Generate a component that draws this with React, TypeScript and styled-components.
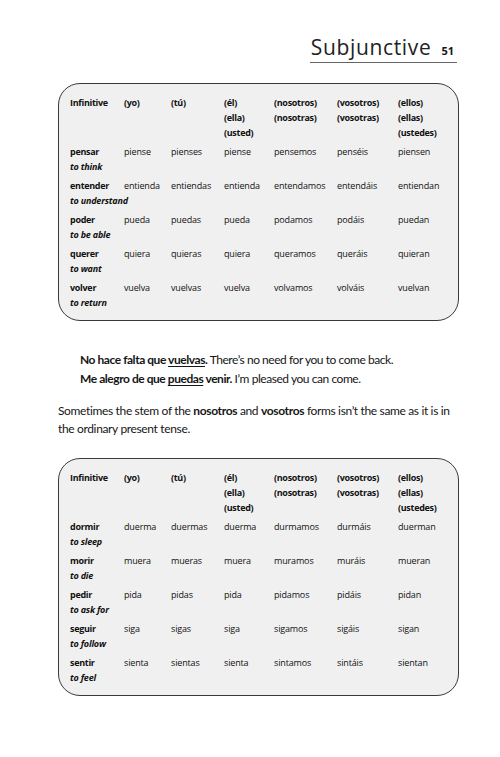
import React from 'react';
import styled, { createGlobalStyle } from 'styled-components';

type Verb = { inf: string; en: string; forms: string[] };

const headers: string[][] = [
  ['Infinitive'],
  ['(yo)'],
  ['(tú)'],
  ['(él)', '(ella)', '(usted)'],
  ['(nosotros)', '(nosotras)'],
  ['(vosotros)', '(vosotras)'],
  ['(ellos)', '(ellas)', '(ustedes)'],
];

const regularVerbs: Verb[] = [
  { inf: 'pensar', en: 'to think', forms: ['piense', 'pienses', 'piense', 'pensemos', 'penséis', 'piensen'] },
  { inf: 'entender', en: 'to understand', forms: ['entienda', 'entiendas', 'entienda', 'entendamos', 'entendáis', 'entiendan'] },
  { inf: 'poder', en: 'to be able', forms: ['pueda', 'puedas', 'pueda', 'podamos', 'podáis', 'puedan'] },
  { inf: 'querer', en: 'to want', forms: ['quiera', 'quieras', 'quiera', 'queramos', 'queráis', 'quieran'] },
  { inf: 'volver', en: 'to return', forms: ['vuelva', 'vuelvas', 'vuelva', 'volvamos', 'volváis', 'vuelvan'] },
];

const stemVerbs: Verb[] = [
  { inf: 'dormir', en: 'to sleep', forms: ['duerma', 'duermas', 'duerma', 'durmamos', 'durmáis', 'duerman'] },
  { inf: 'morir', en: 'to die', forms: ['muera', 'mueras', 'muera', 'muramos', 'muráis', 'mueran'] },
  { inf: 'pedir', en: 'to ask for', forms: ['pida', 'pidas', 'pida', 'pidamos', 'pidáis', 'pidan'] },
  { inf: 'seguir', en: 'to follow', forms: ['siga', 'sigas', 'siga', 'sigamos', 'sigáis', 'sigan'] },
  { inf: 'sentir', en: 'to feel', forms: ['sienta', 'sientas', 'sienta', 'sintamos', 'sintáis', 'sientan'] },
];

const ConjugationTable: React.FC<{ verbs: Verb[] }> = ({ verbs }) => (
  <Box>
    {headers.map((lines, i) => (
      <div key={i}>
        {lines.map((l) => (
          <Line key={l} $weight={700}>
            {l}
          </Line>
        ))}
      </div>
    ))}
    {verbs.map((v) => (
      <React.Fragment key={v.inf}>
        <div>
          <Line $weight={700}>{v.inf}</Line>
          <Gloss>{v.en}</Gloss>
        </div>
        {v.forms.map((f, i) => (
          <div key={i}>
            <Line $weight={500}>{f}</Line>
          </div>
        ))}
      </React.Fragment>
    ))}
  </Box>
);

export default function App() {
  return (
    <Page>
      <GlobalStyle />
      <Header>
        <TitleBar>
          <Title>Subjunctive</Title>
          <PageNo>51</PageNo>
        </TitleBar>
      </Header>

      <ConjugationTable verbs={regularVerbs} />

      <Examples>
        <Example>
          <b>
            No hace falta que <u>vuelvas</u>.
          </b>{' '}
          There’s no need for you to come back.
        </Example>
        <Example>
          <b>
            Me alegro de que <u>puedas</u> venir.
          </b>{' '}
          I’m pleased you can come.
        </Example>
      </Examples>

      <Para>
        Sometimes the stem of the <b>nosotros</b> and <b>vosotros</b> forms isn’t the same as it is in
        the ordinary present tense.
      </Para>

      <ConjugationTable verbs={stemVerbs} />
    </Page>
  );
}

const GlobalStyle = createGlobalStyle`
  body {
    margin: 0;
    background: #ffffff;
    color: #161616;
    font-family: 'Open Sans', 'DejaVu Sans', sans-serif;
  }
`;

const Page = styled.div`
  width: 500px;
  padding: 35px 41px 40px 58px;
  box-sizing: border-box;
`;

const Header = styled.div`
  display: flex;
  justify-content: flex-end;
  padding-right: 2px;
`;

const TitleBar = styled.div`
  display: flex;
  align-items: baseline;
  gap: 10px;
  border-bottom: 1.5px solid #666;
  padding: 0 3px 2px 1px;
`;

const Title = styled.span`
  font-size: 21px;
  font-weight: 400;
  line-height: 25px;
  letter-spacing: 0.65px;
  color: #222;
`;

const PageNo = styled.span`
  font-size: 11px;
  font-weight: 700;
`;

const Box = styled.div`
  margin-top: 20px;
  display: grid;
  grid-template-columns: 54px 47px 53px 50px 63px 61px 1fr;
  row-gap: 4px;
  padding: 11px 0 10px 11px;
  background: #f0f0f0;
  border: 1.5px solid #3a3a3a;
  border-radius: 22px;
  font-size: 9px;
  color: #111;
`;

const Line = styled.div<{ $weight: number }>`
  line-height: 15px;
  white-space: nowrap;
  font-weight: ${(p) => p.$weight};
  letter-spacing: ${(p) => (p.$weight === 700 ? '-0.3px' : '-0.15px')};
`;

const Gloss = styled.div`
  line-height: 15px;
  white-space: nowrap;
  font-style: italic;
  font-weight: 700;
  letter-spacing: -0.2px;
`;

const Examples = styled.div`
  margin-top: 29px;
  padding-left: 22px;
`;

const Example = styled.div`
  font-family: Lato, 'Open Sans', sans-serif;
  font-size: 12px;
  line-height: 19px;
  letter-spacing: -0.45px;
  b {
    font-weight: 700;
  }
  u {
    text-underline-offset: 2px;
  }
`;

const Para = styled.p`
  margin: 14px 0 0;
  font-family: Lato, 'Open Sans', sans-serif;
  font-size: 12px;
  line-height: 18px;
  letter-spacing: -0.35px;
`;
